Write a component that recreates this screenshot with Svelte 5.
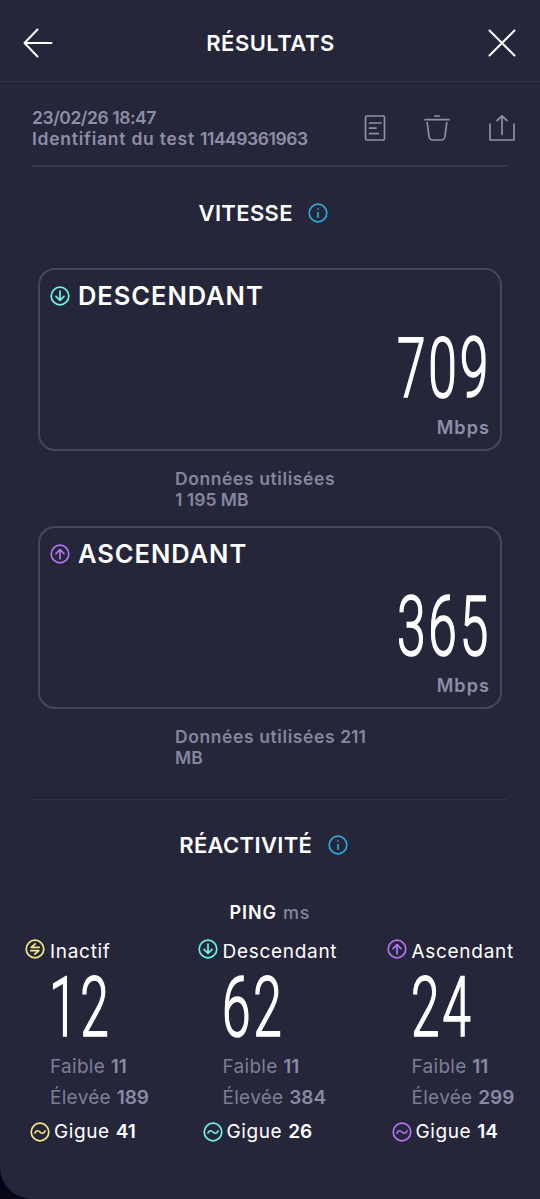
<script>
  const test = { date: '23/02/26 18:47', id: '11449361963' };

  const speeds = [
    { kind: 'down', label: 'DESCENDANT', value: 709, data: '1\u00a0195\u00a0MB' },
    { kind: 'up', label: 'ASCENDANT', value: 365, data: '211 MB' }
  ];

  const pings = [
    { kind: 'idle', label: 'Inactif', value: 12, low: 11, high: 189, jitter: 41 },
    { kind: 'down', label: 'Descendant', value: 62, low: 11, high: 384, jitter: 26 },
    { kind: 'up', label: 'Ascendant', value: 24, low: 11, high: 299, jitter: 14 }
  ];
</script>

{#snippet badge(kind, glyph)}
  <svg class="badge {kind}" width="20" height="20" viewBox="0 0 20 20">
    <circle cx="10" cy="10" r="8.8" />
    {#if glyph === 'down'}
      <path d="M10 5.2v9M6 10.3l4 4 4-4" />
    {:else if glyph === 'up'}
      <path d="M10 14.8v-9M6 9.7l4-4 4 4" />
    {:else if glyph === 'idle'}
      <path d="M14.2 8.3H6.2L10.2 4.8M5.8 11.7h8L9.8 15.2" />
    {:else if glyph === 'jitter'}
      <path d="M5 11c1.2-2.8 3.2-2.8 5-1s3.8 1.8 5-1" />
    {:else}
      <path d="M10 9.5v4.7M10 6v.1" />
    {/if}
  </svg>
{/snippet}

<div class="screen">
  <header>
    <svg class="nav" width="30" height="30" viewBox="0 0 30 30">
      <path d="M28.5 15h-27M14.5 1.5L1.5 15l13 13.500" />
    </svg>
    <h1>RÉSULTATS</h1>
    <svg class="nav" width="28" height="28" viewBox="0 0 28 28">
      <path d="M1.500 1.500l25 25M26.500 1.500l-25 25" />
    </svg>
  </header>

  <section class="meta">
    <div class="meta-text">
      <div class="digits">{test.date}</div>
      <div>Identifiant du test <span class="digits">{test.id}</span></div>
    </div>
    <div class="tools">
      <svg width="22" height="28" viewBox="0 0 22 28">
        <rect x="1.500" y="2" width="19" height="24" rx="1.500" />
        <path d="M5.500 9h11.500M5.500 14.200h6.500M5.500 19.700h9" />
      </svg>
      <svg width="26" height="28" viewBox="0 0 26 28">
        <path d="M1 5.700h24M10.800 2h4.400M3.200 8.500l1.800 14q.5 3.500 4 3.500h8q3.500 0 4-3.500l1.800-14" />
      </svg>
      <svg width="26" height="28" viewBox="0 0 26 28">
        <path d="M1 10v16h24V10M13 20.500V2M8 6.500L13 2l5 4.500" />
      </svg>
    </div>
  </section>

  <div class="section-title speed-title">
    <h2>VITESSE</h2>
    {@render badge('info', 'info')}
  </div>

  {#each speeds as s}
    <div class="card">
      <div class="card-head">
        {@render badge(s.kind, s.kind)}
        <h3>{s.label}</h3>
      </div>
      <div class="big">{s.value}</div>
      <div class="unit">Mbps</div>
    </div>
    <p class="data">Données utilisées <span>{s.data}</span></p>
  {/each}

  <div class="rule"></div>

  <div class="section-title">
    <h2>RÉACTIVITÉ</h2>
    {@render badge('info', 'info')}
  </div>

  <div class="ping"><b>PING</b> <span>ms</span></div>

  <div class="columns">
    {#each pings as p}
      <div class="col">
        <div class="col-head">
          {@render badge(p.kind, p.kind)}
          <span>{p.label}</span>
        </div>
        <div class="big">{p.value}</div>
        <div class="stat">Faible <b>{p.low}</b></div>
        <div class="stat">Élevée <b>{p.high}</b></div>
        <div class="jitter">
          {@render badge(p.kind, 'jitter')}
          <span>Gigue <b>{p.jitter}</b></span>
        </div>
      </div>
    {/each}
  </div>
</div>

<style>
  :global(body) {
    background: #060614;
  }

  .screen {
    box-sizing: border-box;
    width: 540px;
    height: 1199px;
    overflow: hidden;
    background: #25263a;
    border-bottom-left-radius: 32px;
    color: #fff;
    font-family: Inter, "Liberation Sans", sans-serif;
  }

  h1, h2, h3, p {
    margin: 0;
    font-weight: 600;
  }

  svg {
    display: block;
    flex-shrink: 0;
    fill: none;
    stroke-linecap: round;
    stroke-linejoin: round;
  }

  header {
    box-sizing: border-box;
    height: 82px;
    padding: 4px 24px 0 23px;
    border-bottom: 1px solid #35364a;
    display: flex;
    align-items: center;
    justify-content: space-between;
  }

  .nav {
    stroke: #fff;
    stroke-width: 2;
  }

  h1 {
    font-size: 22px;
    line-height: 30px;
    letter-spacing: 0.5px;
  }

  .meta {
    box-sizing: border-box;
    height: 85px;
    margin: 0 32px;
    border-bottom: 2px solid #38394d;
    display: flex;
    justify-content: space-between;
    color: #8e8ea6;
  }

  .meta-text {
    padding-top: 25px;
    font-size: 17.5px;
    font-weight: 600;
    line-height: 21px;
    letter-spacing: 0.75px;
    white-space: nowrap;
  }

  .digits {
    letter-spacing: -0.45px;
  }

  .tools {
    display: flex;
    gap: 38.5px;
    margin: 32px -6.5px 0 0;
  }

  .tools svg {
    stroke: #8e8ea6;
    stroke-width: 1.7;
  }

  .section-title {
    display: flex;
    align-items: center;
    justify-content: center;
    gap: 15.5px;
    height: 30px;
    padding-right: 13px;
  }

  .speed-title {
    margin: 31px 0 40px;
  }

  h2 {
    font-size: 22px;
    line-height: 30px;
    letter-spacing: 0.35px;
  }

  .badge {
    stroke-width: 1.7;
  }

  .info { stroke: #2fa9d8; }
  .down { stroke: #6cf3e4; }
  .up { stroke: #b273f2; }
  .idle { stroke: #f3e883; }

  .card {
    box-sizing: border-box;
    width: 464px;
    height: 183px;
    margin: 0 auto;
    padding: 10px 11px 0 10px;
    border: 2px solid #46475d;
    border-radius: 17px;
  }

  .card-head {
    display: flex;
    align-items: center;
    gap: 8px;
    height: 32px;
  }

  h3 {
    font-size: 25.5px;
    line-height: 32px;
    letter-spacing: 0.95px;
  }

  .big {
    font-family: Roboto, sans-serif;
    font-size: 83px;
    font-weight: 300;
    line-height: 76px;
    letter-spacing: 4.5px;
    transform: scaleX(0.62);
    transform-origin: left;
    -webkit-text-stroke: 1.7px #fff;
  }

  .card .big {
    margin: 19px -2px 0 0;
    transform-origin: right;
    text-align: right;
  }

  .unit {
    margin: 9px -1px 0 0;
    font-size: 18px;
    font-weight: 600;
    line-height: 24px;
    letter-spacing: 1.1px;
    text-align: right;
    color: #8e8ea6;
  }

  .data {
    width: 192px;
    margin: 17px 0 16px 175px;
    font-size: 17.5px;
    line-height: 21px;
    letter-spacing: 0.6px;
    color: #85859d;
  }

  .data span {
    letter-spacing: 0;
  }

  .rule {
    height: 1px;
    margin: 31px 32px 30px;
    background: #313246;
  }

  .ping {
    margin-top: 41px;
    text-align: center;
    font-size: 18px;
    line-height: 24px;
    letter-spacing: 0.9px;
  }

  .ping b {
    font-weight: 600;
  }

  .ping span {
    font-weight: 500;
    color: #85859d;
  }

  .columns {
    display: grid;
    grid-template-columns: 172.5px 189px 1fr;
    padding: 14px 0 0 25px;
    white-space: nowrap;
  }

  .col-head {
    display: flex;
    align-items: flex-start;
    gap: 5px;
    height: 26px;
    font-size: 19px;
    line-height: 26px;
    letter-spacing: 0.7px;
  }

  .col .big {
    margin: 5px 0 5px 24px;
    width: 110px;
  }

  .stat {
    margin-left: 25px;
    font-size: 19px;
    line-height: 31px;
    font-weight: 400;
    letter-spacing: 0.3px;
    color: #7e7e96;
  }

  .stat b, .jitter b {
    font-weight: 600;
    letter-spacing: 0;
  }

  .stat b {
    color: #8a8aa2;
  }

  .jitter {
    display: flex;
    align-items: center;
    gap: 4px;
    height: 37px;
    margin-left: 5px;
    font-size: 19px;
    letter-spacing: 0.6px;
  }
</style>
